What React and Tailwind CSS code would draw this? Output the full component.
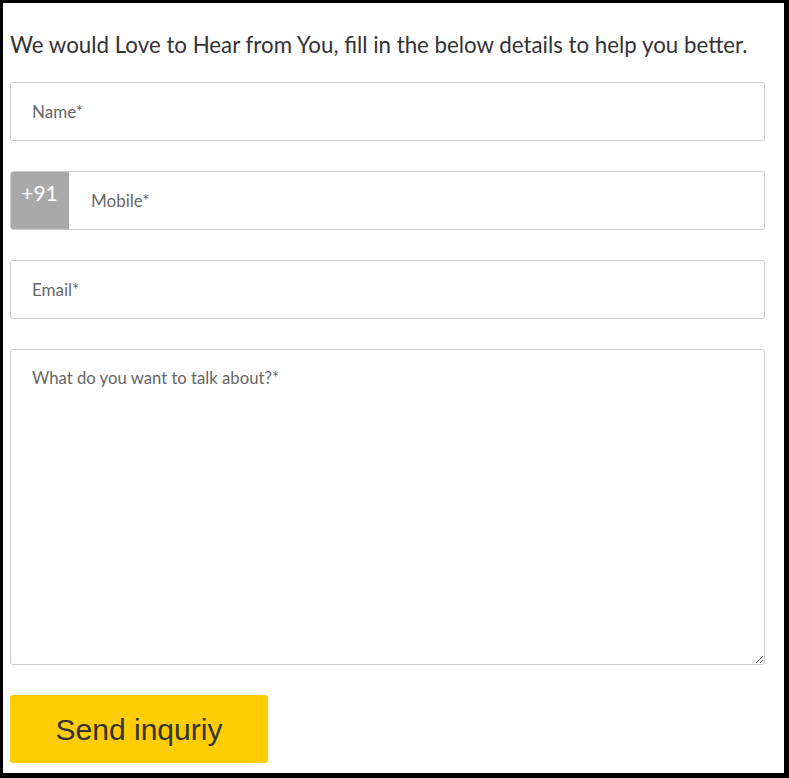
import React from 'react';

const Field = ({ placeholder }) => (
  <input
    type="text"
    placeholder={placeholder}
    className="w-full h-[59px] border border-[#cccccc] rounded-[3px] px-[21px] text-[17px] text-[#555] placeholder:text-[#666] outline-none bg-white"
  />
);

const App = () => {
  return (
    <div className="bg-black pt-[3px] pl-[3px] pr-[5px] pb-[5px] h-[778px]" style={{ fontFamily: 'Lato, "Noto Sans", sans-serif' }}>
      <div className="bg-white h-full pl-[7px] pr-[19px] pt-[27px]">
        <h2 className="text-[22.3px] leading-[30px] text-[#333]">
          We would Love to Hear from You, fill in the below details to help you better.
        </h2>

        <form className="mt-[22px] flex flex-col gap-[30px]">
          <Field placeholder="Name*" />

          <div className="flex h-[59px] border border-[#cccccc] rounded-[3px] overflow-hidden">
            <div className="w-[59px] bg-[#a9a9a9] text-white text-[21px] flex justify-center pt-[6px] -m-px mr-0">
              +91
            </div>
            <input
              type="text"
              placeholder="Mobile*"
              className="flex-1 px-[22px] text-[17px] placeholder:text-[#666] outline-none"
            />
          </div>

          <Field placeholder="Email*" />

          <textarea
            placeholder="What do you want to talk about?*"
            className="w-full h-[316px] border border-[#cccccc] rounded-[3px] px-[21px] pt-[16px] text-[16.7px] placeholder:text-[#666] outline-none"
          />

          <div>
            <button
              type="button"
              className="w-[258px] h-[68px] bg-[#fecc03] rounded-[3px] text-[30px] text-[#333]"
              style={{ fontFamily: '"Liberation Sans", Arial, sans-serif' }}
            >
              Send inquriy
            </button>
          </div>
        </form>
      </div>
    </div>
  );
};

export default App;
